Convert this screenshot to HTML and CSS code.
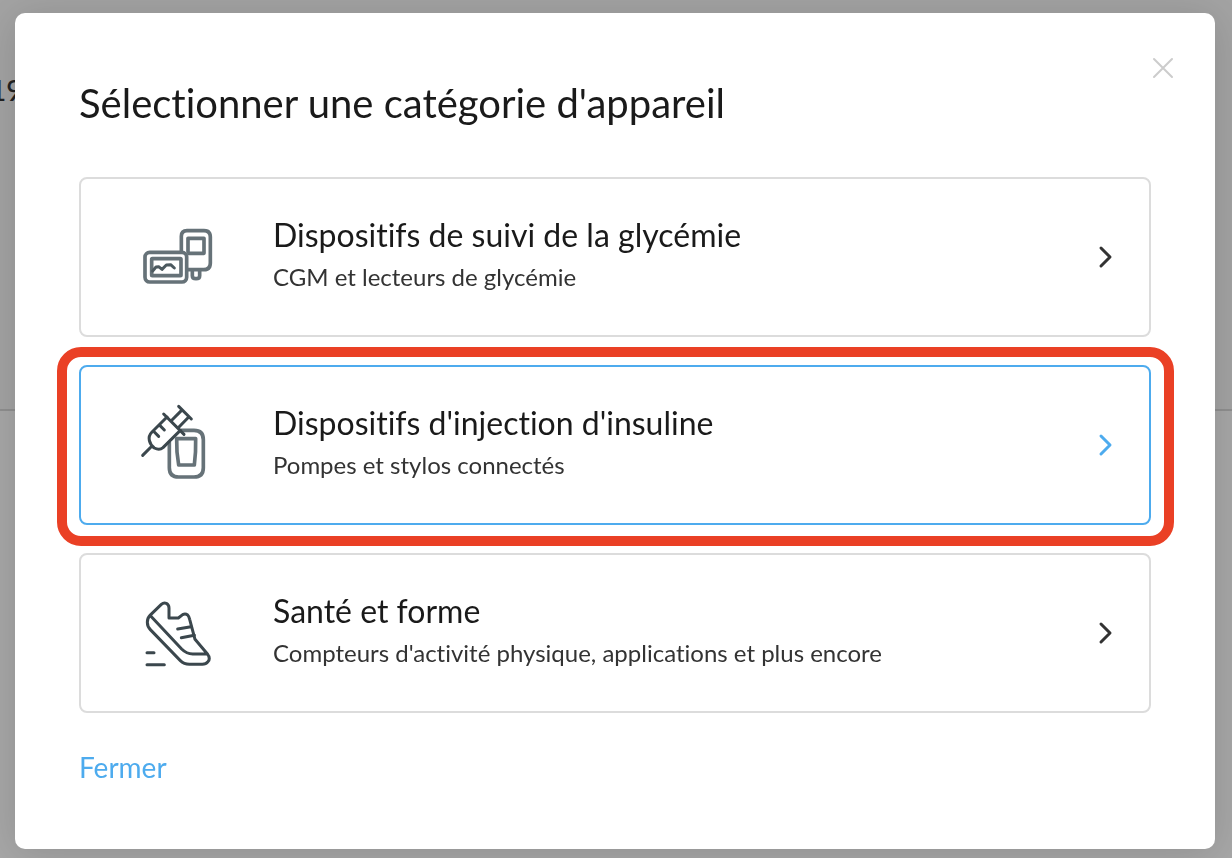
FILE: index.html
```html
<!DOCTYPE html>
<html lang="fr">
<head>
  <meta charset="UTF-8" />
  <title>Sélectionner une catégorie d'appareil</title>
  <meta name="viewport" content="width=device-width, initial-scale=1.0" />
  <link rel="stylesheet" href="styles.css">
</head>
<body>

<!-- Page behind the dialog -->
<div class="page">
  <div class="page-top"><span class="page-year">19</span></div>
</div>

<div class="overlay">
  <div class="modal" role="dialog" aria-modal="true" aria-labelledby="modalTitle">
    <button class="close" type="button" aria-label="Fermer la fenêtre">
      <svg viewBox="0 0 24 24" width="24" height="24"><path d="M3 3L21 21M21 3L3 21"/></svg>
    </button>

    <h1 id="modalTitle">Sélectionner une catégorie d'appareil</h1>

    <div class="cards">
      <button class="card" type="button">
        <svg class="icon" viewBox="-3 -24 300 300">
          <g class="soft">
            <path d="M154 110V64Q154 47 171 47H222Q241 47 241 66V144Q241 164 221 164H174"/>
            <path d="M174 110V70H222V115H176"/>
            <path d="M187 166V182Q187 191 198 191Q209 191 209 182V166"/>
            <rect x="45" y="112" width="125" height="89" rx="14"/>
            <rect x="65" y="131" width="88" height="51" rx="2"/>
          </g>
          <path class="thin" d="M68 168L78 156L86 155L96 163L109 150L122 149L133 159"/>
        </svg>
        <span class="card-text">
          <span class="card-title">Dispositifs de suivi de la glycémie</span>
          <span class="card-desc">CGM et lecteurs de glycémie</span>
        </span>
        <svg class="chevron" viewBox="0 0 16 24" width="16" height="24"><path d="M4 3L13 12L4 21"/></svg>
      </button>

      <button class="card selected" type="button">
        <svg class="icon" viewBox="-3 0 300 300">
          <g class="soft">
            <path d="M154 106H192Q220 106 220 134V218Q220 246 192 246H146Q118 246 118 218V142"/>
            <path d="M140 131H197Q198 172 193 210H146Q139 172 140 131Z"/>
          </g>
          <path d="M38 181L63 156"/>
          <path d="M111 66L66 111Q55 122 58 136Q61 150 73 159Q88 167 99 158L151 106"/>
          <path d="M101 57L162 118M146 34L184 72M126 75L154 47M147 96L174 68"/>
          <path d="M90 92L103 105M73 111L86 124"/>
        </svg>
        <span class="card-text">
          <span class="card-title">Dispositifs d'injection d'insuline</span>
          <span class="card-desc">Pompes et stylos connectés</span>
        </span>
        <svg class="chevron" viewBox="0 0 16 24" width="16" height="24"><path d="M4 3L13 12L4 21"/></svg>
      </button>

      <button class="card" type="button">
        <svg class="icon" viewBox="-3 -21 300 300">
          <path d="M60 76L94 43Q101 37 109 40Q117 44 117 54V84H145L158 74Q166 70 173 75Q177 79 179 88L195 148L233 193Q242 205 234 215Q228 223 217 223H178Q162 223 151 212L61 119Q52 110 52 97Q52 84 60 76L155 177Q170 192 188 192H231"/>
          <path d="M143 117L183 110M154 143L193 136M51 188H72M51 224H103"/>
        </svg>
        <span class="card-text">
          <span class="card-title">Santé et forme</span>
          <span class="card-desc">Compteurs d'activité physique, applications et plus encore</span>
        </span>
        <svg class="chevron" viewBox="0 0 16 24" width="16" height="24"><path d="M4 3L13 12L4 21"/></svg>
      </button>
    </div>

    <a class="dismiss" href="#">Fermer</a>
  </div>
</div>

</body>
</html>
```
FILE: styles.css
```css
* {
  box-sizing: border-box;
}

body {
  margin: 0;
  font-family: Lato, sans-serif;
  font-variant-ligatures: none;
  background: #a7a7a7;
  color: #1a1a1a;
  overflow: hidden;
}

.page-top {
  height: 411px;
  padding-top: 73px;
  background: #a3a3a3;
  border-bottom: 2px solid #8f8f8f;
}

.page-year {
  margin-left: -10px;
  font-size: 28px;
  line-height: 34px;
  font-weight: 500;
  color: #222;
}

.overlay {
  position: fixed;
  inset: 0;
  display: flex;
  padding: 13px 17px 9px 15px;
}

.modal {
  position: relative;
  flex: 1;
  padding: 66px 64px 60px;
  background: #fff;
  border-radius: 10px;
  box-shadow: 0 4px 40px rgba(0, 0, 0, 0.14);
}

h1 {
  margin: 0 0 50px;
  font-size: 40px;
  line-height: 48px;
  font-weight: 400;
}

.close {
  position: absolute;
  top: 43px;
  right: 40px;
  display: flex;
  padding: 0;
  border: none;
  background: none;
  cursor: pointer;
}

.close path {
  fill: none;
  stroke: #ccc;
  stroke-width: 2;
  stroke-linecap: round;
}

.cards {
  display: flex;
  flex-direction: column;
  gap: 28px;
}

.card {
  position: relative;
  display: flex;
  align-items: center;
  width: 100%;
  min-height: 160px;
  padding: 0 36px 0 48px;
  border: 2px solid #dcdcdc;
  border-radius: 8px;
  background: #fff;
  color: #1a1a1a;
  font-family: inherit;
  font-variant-ligatures: inherit;
  text-align: left;
  cursor: pointer;
}

.card.selected {
  border-color: #4dabee;
}

/* red marker around the chosen card */
.card.selected::after {
  content: "";
  position: absolute;
  inset: -20px -25px -23px -24px;
  border: 10px solid #ea4025;
  border-radius: 24px;
  pointer-events: none;
}

.icon {
  flex: none;
  width: 100px;
  height: 100px;
  margin-right: 44px;
  fill: none;
  stroke: #3b474d;
  stroke-width: 9;
  stroke-linecap: round;
  stroke-linejoin: round;
}

.icon .soft {
  stroke: #667278;
  stroke-width: 11;
}

.icon .thin {
  stroke: #4c595f;
}

.card-text {
  flex: 1;
  display: flex;
  flex-direction: column;
  padding-bottom: 4px;
}

.card-title {
  font-size: 32px;
  line-height: 44px;
}

.card-desc {
  font-size: 24px;
  line-height: 40px;
  color: #333;
}

.chevron {
  flex: none;
  fill: none;
  stroke: #333;
  stroke-width: 3;
  stroke-linecap: round;
  stroke-linejoin: round;
}

.selected .chevron {
  stroke: #4dabee;
}

.dismiss {
  display: inline-block;
  margin-top: 37px;
  font-size: 28px;
  line-height: 34px;
  color: #4dabee;
  text-decoration: none;
}
```
